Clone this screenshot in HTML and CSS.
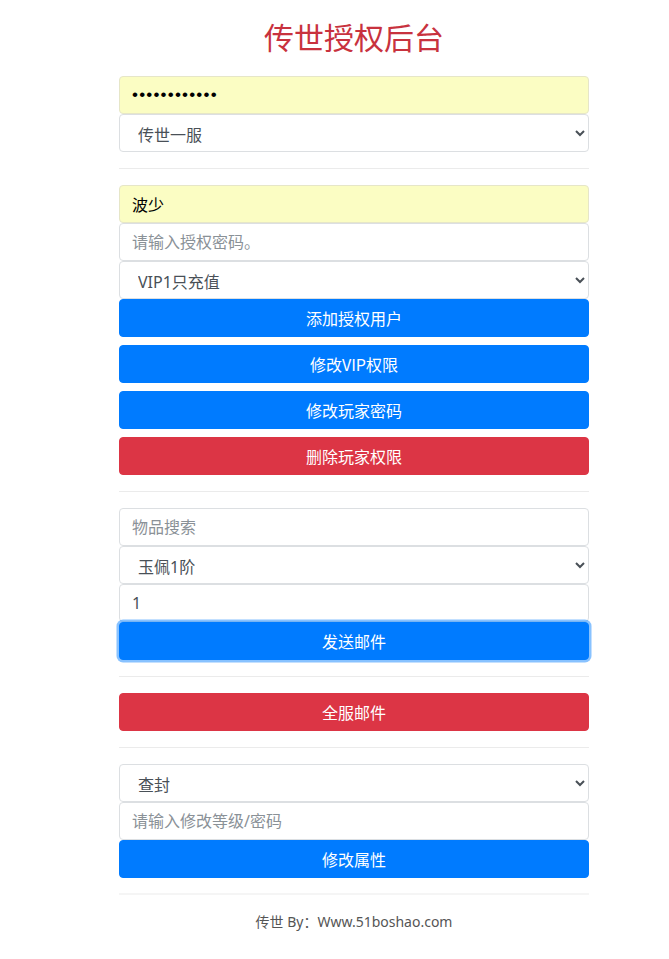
FILE: index.html
```html
<!DOCTYPE html>
<html lang="zh-CN">
<head>
<meta charset="utf-8">
<title>传世授权后台</title>
<link rel="stylesheet" href="styles.css">
</head>
<body>
<div class="page">
  <h2 class="title">传世授权后台</h2>

  <div class="group">
    <input class="field autofill pass" type="password" value="123456789012">
    <select class="field sel"><option>传世一服</option></select>
  </div>
  <hr>

  <div class="group">
    <input class="field autofill" type="text" value="波少">
    <input class="field" type="text" placeholder="请输入授权密码。">
    <select class="field sel"><option>VIP1只充值</option></select>
    <button class="btn primary">添加授权用户</button>
    <button class="btn primary">修改VIP权限</button>
    <button class="btn primary">修改玩家密码</button>
    <button class="btn danger">删除玩家权限</button>
  </div>
  <hr>

  <div class="group">
    <input class="field" type="text" placeholder="物品搜索">
    <select class="field sel"><option>玉佩1阶</option></select>
    <input class="field" type="text" value="1">
    <button class="btn primary focus">发送邮件</button>
  </div>
  <hr>

  <div class="group">
    <button class="btn danger">全服邮件</button>
  </div>
  <hr>

  <div class="group">
    <select class="field sel"><option>查封</option></select>
    <input class="field" type="text" placeholder="请输入修改等级/密码">
    <button class="btn primary">修改属性</button>
  </div>
  <hr class="last">

  <p class="footer">传世 By：Www.51boshao.com</p>
</div>
</body>
</html>
```

FILE: styles.css
```css
* { box-sizing: border-box; }
html, body { margin: 0; padding: 0; background: #fff; }
body {
  font-family: "Noto Sans", "Noto Sans CJK SC", sans-serif;
  font-size: 16px;
  line-height: 1.5;
  color: #212529;
}
.page {
  width: 470px;
  margin-left: 119px;
  padding-top: 18px;
}
.title {
  margin: 0 0 22px;
  font-size: 30px;
  font-weight: 400;
  line-height: 36px;
  text-align: center;
  color: #c8323e;
  font-family: "Noto Sans CJK SC", sans-serif;
}
.group { display: flex; flex-direction: column; }
.field {
  display: block;
  width: 100%;
  height: 38px;
  margin: 0;
  padding: 6px 12px;
  font-family: "Noto Sans", "Noto Sans CJK SC", sans-serif;
  font-size: 16px;
  line-height: 24px;
  color: #495057;
  background: #fff;
  border: 1px solid #dcdfe2;
  border-radius: 4px;
  outline: none;
}
.field::placeholder { color: #8a9197; }
.autofill { background: #fbfdc3; color: #000; border-color: #e6e6c8; }
.pass { letter-spacing: 1.2px; font-family: "Liberation Sans", sans-serif; font-size: 17px; }
.sel { padding: 8px 10px 4px 14px; }
.btn {
  display: block;
  width: 100%;
  height: 38px;
  margin: 0 0 8px;
  padding: 0 12px;
  border: 1px solid transparent;
  border-radius: 4px;
  font-family: "Noto Sans CJK SC", sans-serif;
  font-size: 16px;
  line-height: 36px;
  color: #fff;
  text-align: center;
}
.btn:last-child { margin-bottom: 0; }
.primary { background: #007bff; border-color: #007bff; }
.danger { background: #dc3545; border-color: #dc3545; }
.focus { box-shadow: 0 0 0 2.5px rgba(38, 143, 255, 0.55); }
hr {
  margin: 16px 0;
  border: 0;
  border-top: 1px solid rgba(0, 0, 0, 0.08);
  height: 0;
}
hr.last { border-top: 2px solid rgba(0, 0, 0, 0.04); margin-top: 15px; }
.footer {
  margin: 8px 0 0;
  text-align: center;
  font-size: 14px;
  line-height: 21px;
  color: #555;
}
```
